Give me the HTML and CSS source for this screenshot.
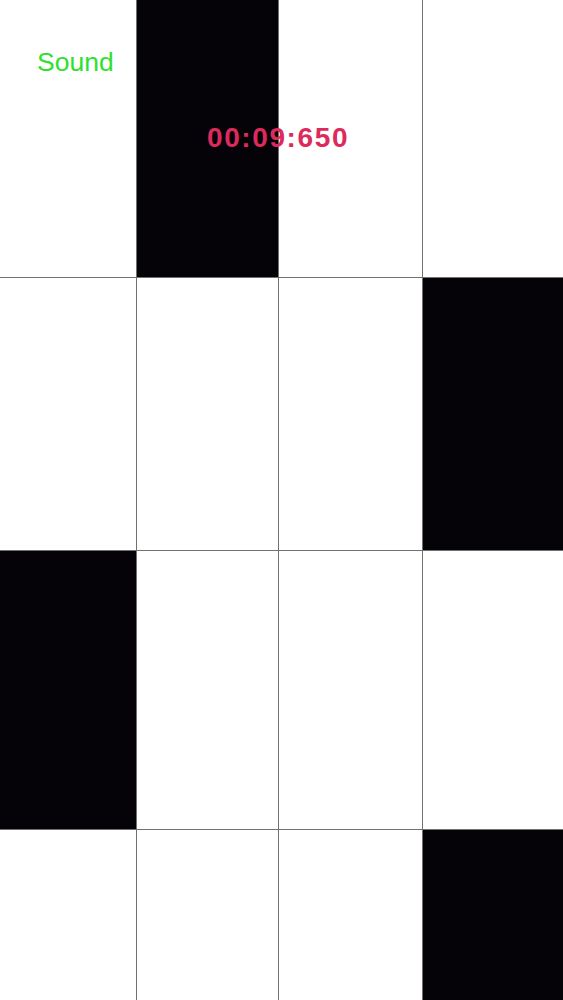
FILE: index.html
```html
<!DOCTYPE html>
<html>
<head>
<meta charset="utf-8">
<link rel="stylesheet" href="styles.css">
</head>
<body>
<div class="board">
  <div class="grid">
    <div class="tile"></div><div class="tile black"></div><div class="tile"></div><div class="tile"></div>
    <div class="tile"></div><div class="tile"></div><div class="tile"></div><div class="tile black"></div>
    <div class="tile black"></div><div class="tile"></div><div class="tile"></div><div class="tile"></div>
    <div class="tile"></div><div class="tile"></div><div class="tile"></div><div class="tile black"></div>
  </div>
  <div class="sound">Sound</div>
  <div class="timer">00:09:650</div>
</div>
</body>
</html>
```
FILE: styles.css
```css
html, body {
  margin: 0;
  padding: 0;
  background: #ffffff;
}
.board {
  position: relative;
  width: 563px;
  height: 1000px;
  overflow: hidden;
}
.grid {
  display: grid;
  grid-template-columns: 136px 141px 143px 140px;
  grid-template-rows: 277px 272px 278px 200px;
  column-gap: 1px;
  row-gap: 1px;
  background: #707070;
  height: 1030px;
}
.tile {
  background: #ffffff;
}
.tile.black {
  background: #050308;
}
.sound {
  position: absolute;
  left: 37px;
  top: 49px;
  font-family: "Liberation Sans", Arial, sans-serif;
  font-size: 26.5px;
  line-height: 26px;
  color: #2fe02f;
}
.timer {
  position: absolute;
  left: 207px;
  top: 124px;
  font-family: "Liberation Sans", Arial, sans-serif;
  font-weight: bold;
  font-size: 28px;
  line-height: 28px;
  letter-spacing: 1.6px;
  color: #dc2a5c;
}
```
